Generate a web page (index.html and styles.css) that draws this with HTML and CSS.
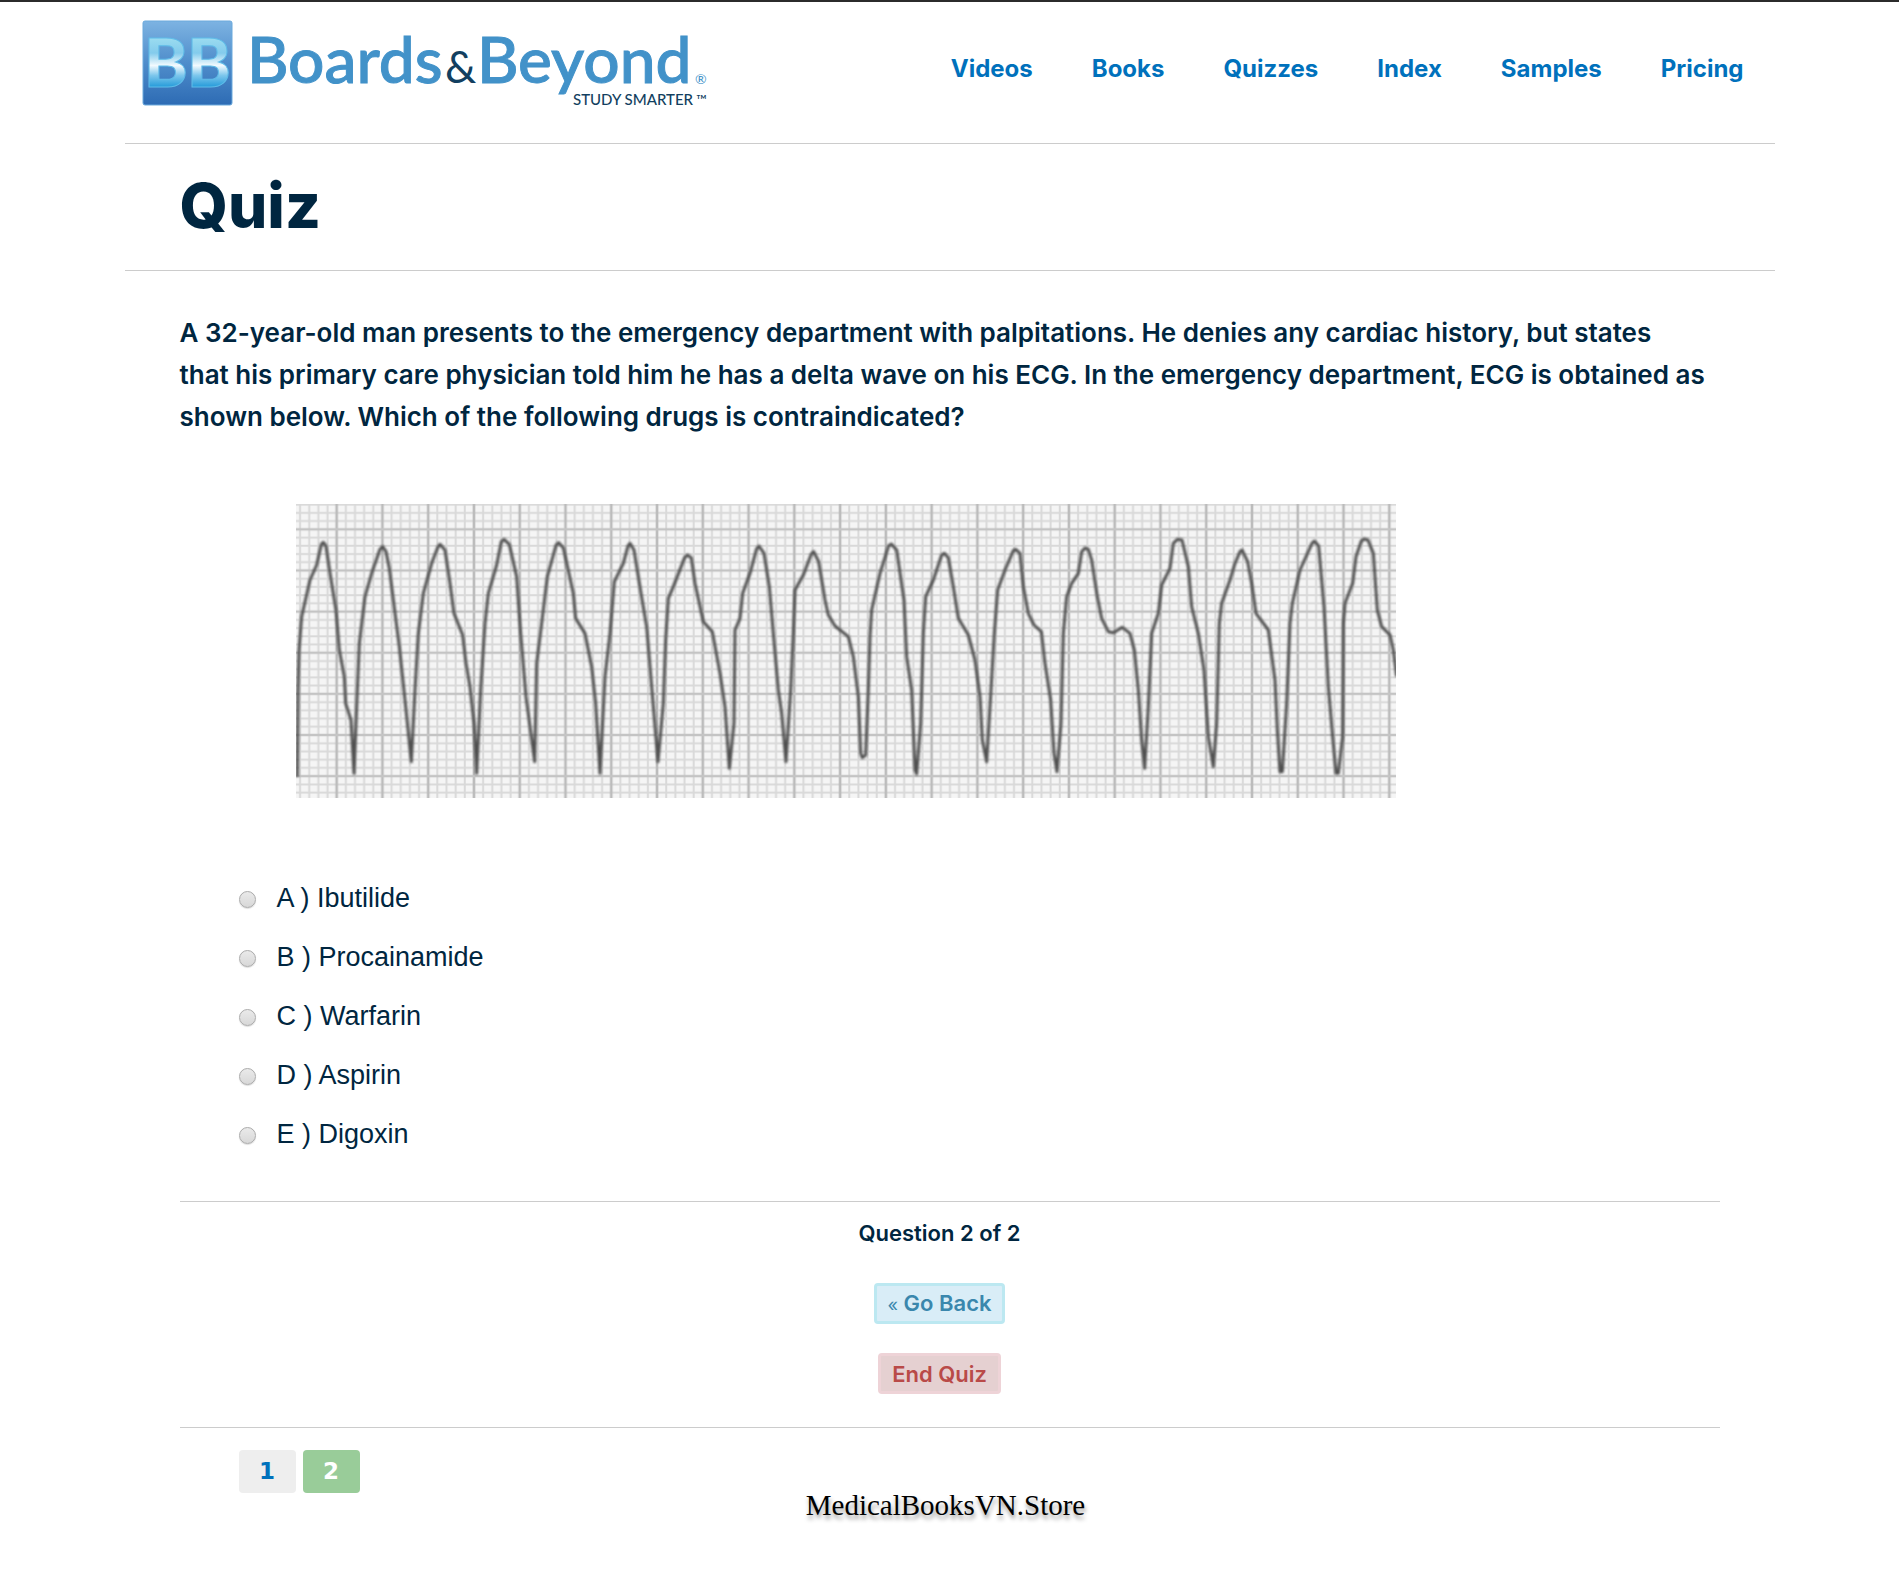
FILE: index.html
```html
<!DOCTYPE html>
<html lang="en">
<head>
<meta charset="utf-8">
<meta name="viewport" content="width=device-width, initial-scale=1">
<title>Quiz – Boards &amp; Beyond</title>
<link rel="stylesheet" href="styles.css">
</head>
<body>
<div class="page">
  <header class="header">
    <a class="logo" href="#" aria-label="Boards &amp; Beyond, Study Smarter">
      <svg viewBox="0 0 572 88" width="572" height="88">
        <defs>
          <linearGradient id="tile" x1="0" y1="0" x2="0" y2="1">
            <stop offset="0" stop-color="#7db3e2"/><stop offset=".5" stop-color="#4f8dcb"/><stop offset="1" stop-color="#2d6bb4"/>
          </linearGradient>
          <linearGradient id="face" x1="0" y1="18" x2="0" y2="68" gradientUnits="userSpaceOnUse">
            <stop offset="0" stop-color="#9bdcf0"/><stop offset=".3" stop-color="#83cbec"/><stop offset=".55" stop-color="#f2fafe"/><stop offset=".75" stop-color="#7cc6ec"/><stop offset="1" stop-color="#1d97d8"/>
          </linearGradient>
        </defs>
        <rect x="1" y="1" width="89" height="84" rx="2" fill="url(#tile)" stroke="#6aa9dc"/>
        <text class="logo-bb" x="2" y="67" fill="url(#face)">B</text>
        <text class="logo-bb" x="45" y="67" fill="url(#face)">B</text>
        <text class="logo-word" x="105" y="63">Boards</text>
        <text class="logo-amp" x="303" y="63">&amp;</text>
        <text class="logo-word" x="335" y="63">Beyond</text>
        <text class="logo-mark" x="553" y="64">®</text>
        <text class="logo-tag" x="431" y="85">STUDY SMARTER</text>
        <text class="logo-tm" x="554" y="85">™</text>
      </svg>
    </a>
    <nav class="nav">
      <a href="#">Videos</a>
      <a href="#">Books</a>
      <a href="#">Quizzes</a>
      <a href="#">Index</a>
      <a href="#">Samples</a>
      <a href="#">Pricing</a>
    </nav>
  </header>

  <h1 class="title">Quiz</h1>

  <main class="content">
    <form class="quiz">
      <p class="question" id="question">A 32-year-old man presents to the emergency department with palpitations. He denies any cardiac history, but states<br> that his primary care physician told him he has a delta wave on his ECG. In the emergency department, ECG is obtained as shown below. Which of the following drugs is contraindicated?</p>

      <svg class="ecg" viewBox="48 42 3300 882" role="img" aria-label="ECG strip">
        <defs>
          <pattern id="grid" x="170" y="118" width="137.3" height="123.4" patternUnits="userSpaceOnUse">
            <path d="M27.5 0V124M55 0V124M82.4 0V124M109.8 0V124M0 24.7H138M0 49.4H138M0 74H138M0 98.7H138" stroke="#d9d9d9" stroke-width="6"/>
            <path d="M0 0V124M137.3 0V124" stroke="#bcbcbc" stroke-width="8"/>
            <path d="M0 0H138M0 123.4H138" stroke="#c4c4c4" stroke-width="7"/>
          </pattern>
          <filter id="soft" x="0" y="0" width="3400" height="960" filterUnits="userSpaceOnUse"><feGaussianBlur stdDeviation="2.4"/></filter>
        </defs>
        <rect x="48" y="42" width="3300" height="882" fill="#f5f5f5"/>
        <rect x="48" y="42" width="3300" height="882" fill="url(#grid)"/>
        <polyline class="trace" filter="url(#soft)" points="52,860 54,600 57,480 65,380 90,270 110,225 124,163 130,157 138,168 150,250 168,360 178,480 193,560 197,640 213,690 222,850
          232,600 238,460 255,320 275,250 300,178 308,170 318,185 328,235 340,330 358,470 375,630 394,815
          405,600 415,430 430,310 455,220 474,170 480,163 495,180 510,280 522,370 548,435 558,520 570,590 582,700 590,850
          602,600 615,400 625,310 650,225 664,155 672,148 688,163 710,260 722,430 738,620 764,815
          770,520 785,400 802,260 828,166 836,158 850,173 880,310 887,385 915,430 935,530 947,640 960,850
          975,560 990,430 1003,275 1030,220 1044,168 1050,160 1062,180 1083,310 1100,410 1115,590 1134,815
          1150,640 1157,450 1165,325 1180,290 1214,203 1222,195 1234,203 1245,280 1270,395 1297,425 1320,550 1335,650 1348,835
          1362,700 1365,420 1380,385 1388,310 1410,250 1430,176 1437,168 1452,190 1468,290 1480,430 1495,600 1505,670 1518,815
          1532,600 1540,430 1545,300 1570,255 1594,192 1601,185 1616,215 1635,330 1645,375 1665,408 1705,440 1720,500 1735,620 1742,790 1747,803 1757,795
          1765,600 1770,440 1775,360 1800,250 1826,167 1834,162 1850,180 1872,330 1880,500 1895,600 1905,840 1910,852
          1922,700 1930,430 1937,320 1960,270 1985,195 1993,190 2005,203 2020,290 2035,385 2065,435 2085,510 2100,620 2107,750 2120,815
          2133,600 2143,430 2153,300 2175,240 2200,182 2207,178 2220,190 2230,290 2245,370 2262,405 2284,425 2295,520 2312,630 2322,790 2331,845
          2343,700 2350,430 2360,320 2375,280 2395,250 2405,185 2415,174 2425,178 2435,210 2452,320 2465,385 2485,425 2500,428 2527,412 2550,430 2563,480 2575,600 2585,750 2594,835
          2605,650 2615,430 2635,370 2645,285 2670,235 2680,160 2692,148 2706,150 2725,230 2735,350 2755,430 2772,540 2785,740 2800,830
          2810,700 2818,400 2825,340 2850,270 2865,220 2880,185 2886,180 2903,215 2915,280 2928,370 2965,420 2985,570 2992,720 3000,845 3007,845
          3020,640 3030,400 3037,340 3060,240 3096,160 3103,153 3116,168 3132,350 3145,590 3158,740 3168,850 3175,850
          3188,740 3190,400 3195,340 3218,280 3228,200 3244,153 3252,147 3264,150 3280,190 3292,360 3305,410 3330,435 3340,480 3350,560"/>
      </svg>

      <ul class="options">
        <li><input type="radio" name="answer" id="a"><label for="a">A ) Ibutilide</label></li>
        <li><input type="radio" name="answer" id="b"><label for="b">B ) Procainamide</label></li>
        <li><input type="radio" name="answer" id="c"><label for="c">C ) Warfarin</label></li>
        <li><input type="radio" name="answer" id="d"><label for="d">D ) Aspirin</label></li>
        <li><input type="radio" name="answer" id="e"><label for="e">E ) Digoxin</label></li>
      </ul>

      <div class="controls">
        <p class="progress">Question 2 of 2</p>
        <button class="btn btn-back" type="button"><span class="chevrons">«</span> Go Back</button>
        <button class="btn btn-end" type="button">End Quiz</button>
      </div>
    </form>

    <nav class="pager" aria-label="Questions">
      <a href="#">1</a>
      <a class="current" href="#" aria-current="page">2</a>
    </nav>
  </main>
  <footer class="credit">MedicalBooksVN.Store</footer>
</div>
</body>
</html>
```
FILE: styles.css
```css
* {
  box-sizing: border-box;
}

body {
  margin: 0;
  border-top: 2px solid #2b2b2b;
  background: #fff;
  color: #002640;
  font-family: "Liberation Sans", Arial, sans-serif;
}

.page {
  max-width: 1650px;
  margin: 0 auto;
}

.header {
  display: flex;
  justify-content: space-between;
  align-items: flex-start;
  padding: 18px 31px 35px 17px;
  border-bottom: 1px solid #ccc;
}

.logo svg {
  display: block;
}

.logo-bb {
  font: 900 66px Lato, sans-serif;
  stroke: #5fbce8;
}

.logo-word {
  font: 500 64px Lato, sans-serif;
  fill: #4292c9;
  stroke: #4292c9;
}

.logo-amp {
  font: 44px Lato, sans-serif;
  fill: #123f60;
}

.logo-mark {
  font: 14px Lato, sans-serif;
  fill: #4292c9;
}

.logo-tag {
  font: 500 15px Lato, sans-serif;
  fill: #123f60;
}

.logo-tm {
  font: 14px Lato, sans-serif;
  fill: #123f60;
}

.nav {
  display: flex;
  gap: 59px;
  padding-top: 33px;
}

.nav a {
  color: #0071bc;
  font: 700 24px/32px Inter, sans-serif;
  text-decoration: none;
}

.title {
  margin: 0;
  padding: 26px 55px 28px;
  border-bottom: 1px solid #ccc;
  font: 800 62px/72px Inter, sans-serif;
}

.content {
  padding: 41px 55px 0;
}

.question {
  margin: 0;
  font: 600 26px/42px Inter, sans-serif;
}

.ecg {
  display: block;
  width: 100%;
  max-width: 1100px;
  margin: 66px 0 71px 116px;
}

.trace {
  fill: none;
  stroke: #505050;
  stroke-width: 9;
  stroke-linejoin: round;
}

.options {
  margin: 0;
  padding: 0 0 37px 59px;
  border-bottom: 1px solid #ccc;
  list-style: none;
}

.options li {
  display: flex;
  align-items: center;
  gap: 21px;
  height: 59px;
  font-size: 27px;
}

.options input {
  appearance: none;
  width: 17px;
  height: 17px;
  margin: 2px 0 0;
  border: 1px solid #aaa;
  border-radius: 50%;
  background: linear-gradient(#eaeaea, #d8d8d8);
  box-shadow: 0 1px 1px #ddd;
}

.options input:checked {
  background: radial-gradient(#444 35%, #e0e0e0 40%);
}

.controls {
  display: flex;
  flex-direction: column;
  align-items: center;
  padding: 16px 20px 33px 0;
  border-bottom: 1px solid #ccc;
}

.progress {
  margin: 0 0 35px;
  font: 600 22px/30px Inter, sans-serif;
}

.btn {
  height: 41px;
  padding: 0 11px;
  border: 3px solid;
  border-radius: 4px;
  font: 600 22px/34px Inter, sans-serif;
}

.btn-back {
  margin-bottom: 29px;
  border-color: #bce8f1;
  background: #d9edf7;
  color: #3a87ad;
}

.chevrons {
  font-weight: normal;
  font-size: 18px;
}

.btn-end {
  border-color: #eed3d7;
  background: #e5d0d1;
  color: #b94a48;
}

.pager {
  display: flex;
  gap: 7px;
  padding: 22px 59px 0;
}

.pager a {
  width: 57px;
  border-radius: 4px;
  background: #eee;
  color: #0071bc;
  font: bold 23px/43px "DejaVu Sans", sans-serif;
  text-align: center;
  text-decoration: none;
}

.pager .current {
  background: #9c9;
  color: #fff;
}

.credit {
  padding: 0 8px 48px 0;
  color: #000;
  font: 29px/24px "Liberation Serif", serif;
  text-align: center;
  text-shadow: 1px 4px 4px #999;
}
```
